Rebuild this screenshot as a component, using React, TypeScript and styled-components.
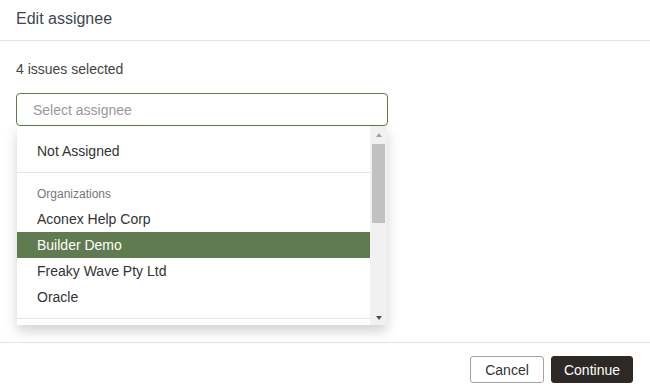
import React from "react";
import styled, { createGlobalStyle } from "styled-components";

const Global = createGlobalStyle`
  html, body { margin: 0; padding: 0; background: #fff; }
  body { font-family: "Liberation Sans", Arial, sans-serif; color: #333; }
  * { box-sizing: border-box; }
`;

const Modal = styled.div`
  width: 650px;
  height: 391px;
  display: flex;
  flex-direction: column;
  background: #fff;
`;

const Header = styled.div`
  height: 41px;
  padding: 10px 16px 0;
  border-bottom: 1px solid #e3e3e3;
`;

const Title = styled.h1`
  margin: 0;
  font-size: 16px;
  font-weight: normal;
  line-height: 18px;
  color: #3d4751;
`;

const Body = styled.div`
  flex: 1;
  padding: 20px 16px 0;
`;

const Count = styled.div`
  font-size: 14px;
  line-height: 16px;
  color: #444;
  margin-bottom: 16px;
`;

const SelectWrap = styled.div`
  position: relative;
  width: 372px;
`;

const SelectBox = styled.div`
  height: 33px;
  border: 1px solid #5c7a4c;
  border-radius: 4px;
  padding: 0 16px;
  display: flex;
  align-items: center;
  font-size: 14px;
  color: #999;
`;

const Dropdown = styled.div`
  position: absolute;
  top: 100%;
  left: 1px;
  right: 1px;
  height: 199px;
  background: #fff;
  display: flex;
  box-shadow: 0 6px 12px rgba(0, 0, 0, 0.18);
  z-index: 10;
`;

const List = styled.div`
  flex: 1;
  overflow: hidden;
  padding-top: 12px;
`;

const Section = styled.div`
  padding-bottom: 8px;
  border-bottom: 1px solid #e5e5e5;
  margin-bottom: 8px;
`;

const Option = styled.div<{ $active?: boolean }>`
  height: 26px;
  line-height: 26px;
  padding: 0 20px;
  font-size: 14px;
  color: ${(p) => (p.$active ? "#fff" : "#333")};
  background: ${(p) => (p.$active ? "#5f7b4f" : "transparent")};
`;

const GroupLabel = styled.div`
  height: 25px;
  line-height: 26px;
  padding: 0 20px;
  font-size: 12px;
  color: #777;
`;

const Scrollbar = styled.div`
  width: 17px;
  background: #f1f1f1;
  display: flex;
  flex-direction: column;
  align-items: center;
`;

const Arrow = styled.div<{ $down?: boolean; $color: string }>`
  height: 17px;
  width: 17px;
  display: flex;
  align-items: center;
  justify-content: center;
  &::before {
    content: "";
    width: 0;
    height: 0;
    border-left: 3.5px solid transparent;
    border-right: 3.5px solid transparent;
    ${(p) =>
      p.$down
        ? `border-top: 4px solid ${p.$color}; margin-top: 2px;`
        : `border-bottom: 4px solid ${p.$color}; margin-top: 1px;`}
  }
`;

const Track = styled.div`
  flex: 1;
  width: 100%;
  padding: 1px 2px 0;
`;

const Thumb = styled.div`
  height: 79px;
  background: #c1c1c1;
`;

const Footer = styled.div`
  height: 49px;
  border-top: 1px solid #e3e3e3;
  padding: 13px 17px 0 0;
  display: flex;
  justify-content: flex-end;
  gap: 7px;
`;

const Button = styled.button<{ $primary?: boolean }>`
  height: 27px;
  padding: 0;
  width: ${(p) => (p.$primary ? "82px" : "74px")};
  border-radius: 3px;
  font-family: "Liberation Sans", Arial, sans-serif;
  font-size: 14px;
  border: 1px solid ${(p) => (p.$primary ? "#2d2926" : "#a3a3a3")};
  background: ${(p) => (p.$primary ? "#2d2926" : "#fff")};
  color: ${(p) => (p.$primary ? "#fff" : "#333")};
`;

export default function App() {
  return (
    <>
      <Global />
      <Modal>
        <Header>
          <Title>Edit assignee</Title>
        </Header>
        <Body>
          <Count>4 issues selected</Count>
          <SelectWrap>
            <SelectBox>Select assignee</SelectBox>
            <Dropdown>
              <List>
                <Section>
                  <Option>Not Assigned</Option>
                </Section>
                <Section>
                  <GroupLabel>Organizations</GroupLabel>
                  <Option>Aconex Help Corp</Option>
                  <Option $active>Builder Demo</Option>
                  <Option>Freaky Wave Pty Ltd</Option>
                  <Option>Oracle</Option>
                </Section>
              </List>
              <Scrollbar>
                <Arrow $color="#a3a3a3" />
                <Track>
                  <Thumb />
                </Track>
                <Arrow $down $color="#505050" />
              </Scrollbar>
            </Dropdown>
          </SelectWrap>
        </Body>
        <Footer>
          <Button>Cancel</Button>
          <Button $primary>Continue</Button>
        </Footer>
      </Modal>
    </>
  );
}
